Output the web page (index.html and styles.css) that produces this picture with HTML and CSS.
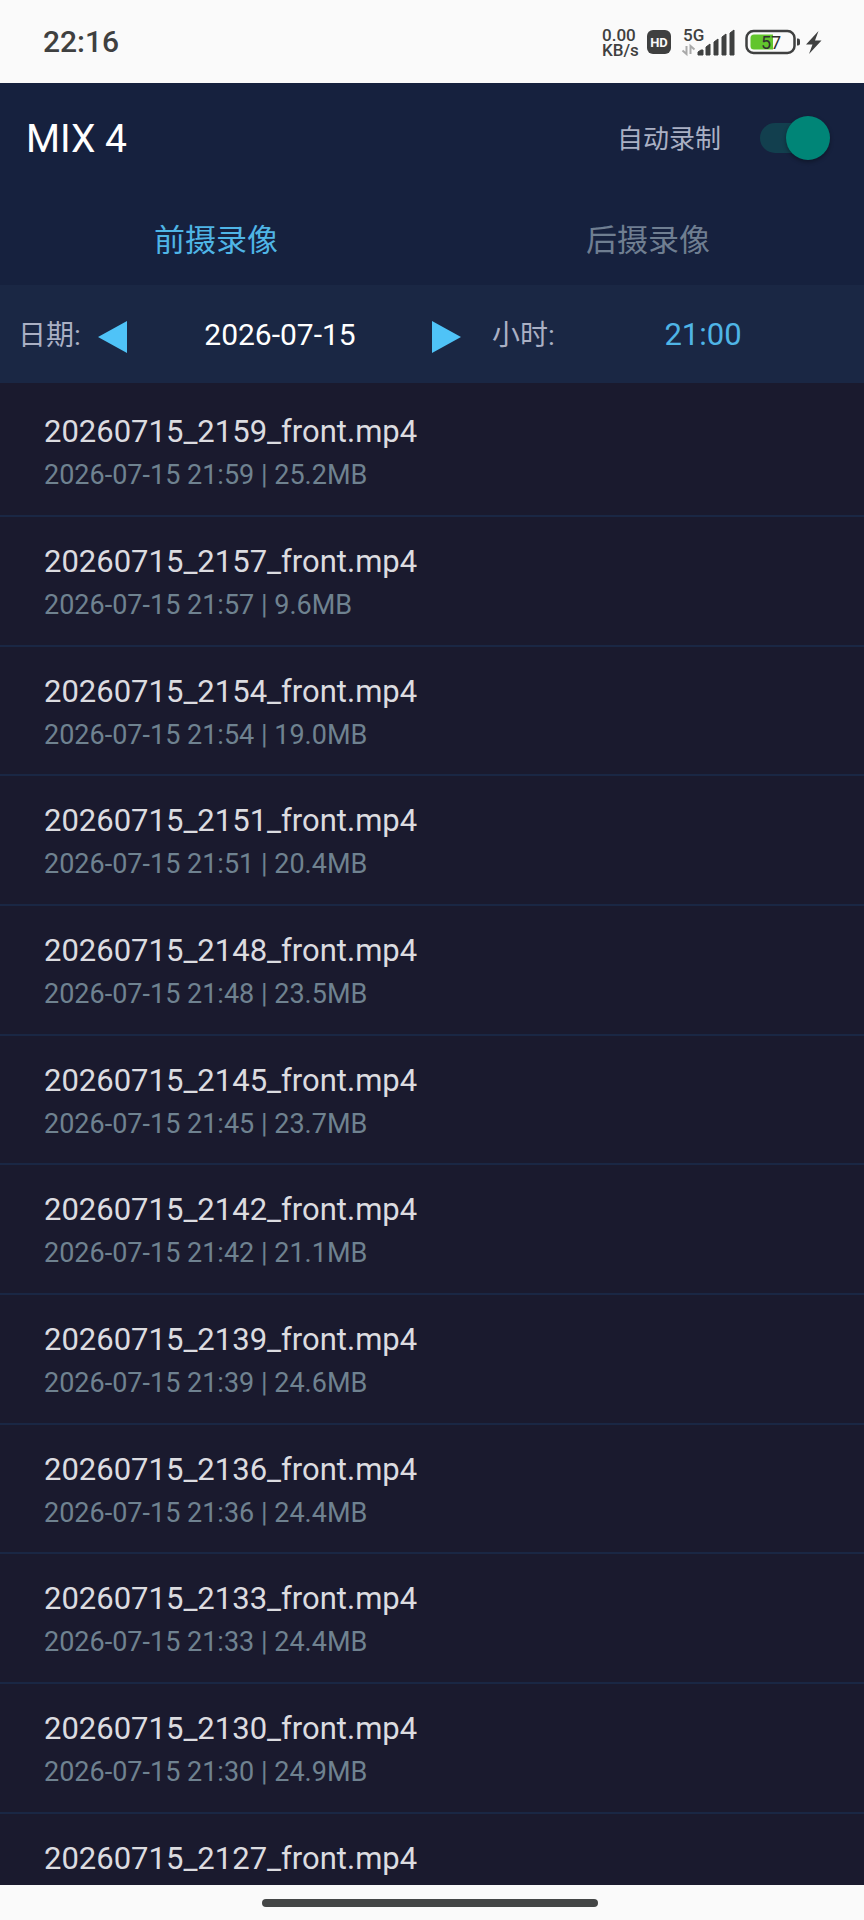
FILE: index.html
```html
<!DOCTYPE html>
<html lang="zh-CN">
<head>
<meta charset="utf-8">
<meta name="viewport" content="width=device-width, initial-scale=1">
<title>MIX 4</title>
<link rel="stylesheet" href="styles.css">
</head>
<body>
<div class="app">
  <div class="status">
    <span class="clock">22:16</span>
    <div class="status-icons">
      <div class="speed"><span>0.00</span><span>KB/s</span></div>
      <svg class="hd" width="24" height="24" viewBox="0 0 24 24" role="img" aria-label="HD">
        <rect width="24" height="24" rx="6" fill="#3f4040"/>
        <text x="12" y="17" text-anchor="middle" class="hd-text">HD</text>
      </svg>
      <svg class="signal" width="54" height="28" viewBox="0 0 54 28" role="img" aria-label="5G">
        <text x="2" y="13" class="net-text">5G</text>
        <path d="M5.500 18v8L1.500 22.500M9.500 26v-8l4 3.500" fill="none" stroke="#a9a9a9" stroke-width="2"/>
        <path d="M17 27v-3l3-2h2v5zM25 27v-8l4-3v11zM33 27V14l4-3v16zM41 27V9l4-3v21zM49 27V5l4-3v25z" fill="#3f4040" stroke="#3f4040" stroke-width="1" stroke-linejoin="round"/>
      </svg>
      <svg class="battery" width="78" height="26" viewBox="0 0 78 26" role="img" aria-label="57%">
        <rect x="1.500" y="2" width="48" height="22" rx="7" fill="none" stroke="#3f4040" stroke-width="2.500"/>
        <path d="M9 5.500h19v15H9a3.500 3.500 0 0 1-3.500-3.500V9A3.500 3.500 0 0 1 9 5.500z" fill="#62c52c"/>
        <path d="M52 9.500h1a2 2 0 0 1 2 2v3a2 2 0 0 1-2 2h-1z" fill="#3f4040"/>
        <text x="26" y="19.500" text-anchor="middle" class="battery-text">57</text>
        <path d="M73.500 2 61 15.500h6.500L64 25l12.500-13.500H70z" fill="#3f4040"/>
      </svg>
    </div>
  </div>

  <header class="header">
    <h1 class="title">MIX 4</h1>
    <label class="auto">
      <span class="auto-text">自动录制</span>
      <input class="switch" type="checkbox" role="switch" checked>
    </label>
  </header>

  <nav class="tabs">
    <button class="tab tab-active" type="button">前摄录像</button>
    <button class="tab" type="button">后摄录像</button>
  </nav>

  <div class="filters">
    <span class="filter-label">日期:</span>
    <button class="arrow" type="button" aria-label="前一天"><svg width="30" height="32" viewBox="0 0 30 32"><path d="M0 16 29 0v32z" fill="#4fc3f7"/></svg></button>
    <button class="date" type="button">2026-07-15</button>
    <button class="arrow" type="button" aria-label="后一天"><svg width="30" height="32" viewBox="0 0 30 32"><path d="M29 16 0 0v32z" fill="#4fc3f7"/></svg></button>
    <label class="filter-label hour-label" for="hour">小时:</label>
    <select class="hour" id="hour"><option>21:00</option></select>
  </div>

  <ul class="list">
    <li class="item"><span class="name">20260715_2159_front.mp4</span><span class="meta">2026-07-15 21:59 | 25.2MB</span></li>
    <li class="item"><span class="name">20260715_2157_front.mp4</span><span class="meta">2026-07-15 21:57 | 9.6MB</span></li>
    <li class="item"><span class="name">20260715_2154_front.mp4</span><span class="meta">2026-07-15 21:54 | 19.0MB</span></li>
    <li class="item"><span class="name">20260715_2151_front.mp4</span><span class="meta">2026-07-15 21:51 | 20.4MB</span></li>
    <li class="item"><span class="name">20260715_2148_front.mp4</span><span class="meta">2026-07-15 21:48 | 23.5MB</span></li>
    <li class="item"><span class="name">20260715_2145_front.mp4</span><span class="meta">2026-07-15 21:45 | 23.7MB</span></li>
    <li class="item"><span class="name">20260715_2142_front.mp4</span><span class="meta">2026-07-15 21:42 | 21.1MB</span></li>
    <li class="item"><span class="name">20260715_2139_front.mp4</span><span class="meta">2026-07-15 21:39 | 24.6MB</span></li>
    <li class="item"><span class="name">20260715_2136_front.mp4</span><span class="meta">2026-07-15 21:36 | 24.4MB</span></li>
    <li class="item"><span class="name">20260715_2133_front.mp4</span><span class="meta">2026-07-15 21:33 | 24.4MB</span></li>
    <li class="item"><span class="name">20260715_2130_front.mp4</span><span class="meta">2026-07-15 21:30 | 24.9MB</span></li>
    <li class="item"><span class="name">20260715_2127_front.mp4</span></li>
  </ul>

  <div class="home"><div class="home-pill"></div></div>
</div>
</body>
</html>
```
FILE: styles.css
```css
* {
  box-sizing: border-box;
}

body {
  margin: 0;
  background: #1a1a2e;
  font-family: Roboto, "Noto Sans CJK SC", sans-serif;
}

button,
select {
  margin: 0;
  padding: 0;
  border: 0;
  background: none;
  font-family: inherit;
}

svg {
  display: block;
  overflow: visible;
}

.app {
  display: flex;
  flex-direction: column;
  height: 100vh;
}

.status {
  display: flex;
  flex: none;
  align-items: center;
  justify-content: space-between;
  height: 83px;
  padding: 0 41px 0 43px;
  background: #fafafa;
  color: #3f4040;
}

.clock {
  font-size: 30px;
  font-weight: 500;
}

.status-icons {
  display: flex;
  align-items: center;
}

.speed {
  display: flex;
  flex-direction: column;
  width: 38px;
  margin-right: 7px;
  padding-top: 2px;
  font-size: 17px;
  font-weight: 500;
  line-height: 15px;
}

.hd {
  margin-right: 10px;
}

.signal {
  margin-right: 10px;
}

.hd-text {
  fill: #fafafa;
  font-size: 13px;
  font-weight: 700;
}

.net-text {
  fill: #3f4040;
  font-size: 17px;
  font-weight: 500;
}

.battery-text {
  fill: #303030;
  font-size: 18px;
  font-weight: 400;
}

.header {
  display: flex;
  flex: none;
  align-items: center;
  justify-content: space-between;
  height: 110px;
  padding: 0 34px 0 26px;
  background: #16213e;
}

.title {
  margin: 0;
  padding-top: 2px;
  color: #fff;
  font-size: 39px;
  font-weight: 400;
}

.auto {
  display: flex;
  align-items: center;
  gap: 39px;
  color: #aab0c4;
  font-size: 26px;
}

.auto-text {
  padding-bottom: 4px;
}

.switch {
  appearance: none;
  display: flex;
  align-items: center;
  width: 70px;
  height: 44px;
  margin: 0;
}

.switch::before {
  content: "";
  flex: none;
  width: 56px;
  height: 30px;
  margin-right: -30px;
  border-radius: 15px;
  background: #123f4e;
}

.switch::after {
  content: "";
  z-index: 1;
  flex: none;
  width: 44px;
  height: 44px;
  border-radius: 50%;
  background: #008577;
  box-shadow: 0 2px 4px #0005;
}

.tabs {
  display: grid;
  flex: none;
  grid-template-columns: 1fr 1fr;
  height: 92px;
  background: #16213e;
}

.tab {
  padding-bottom: 4px;
  color: #6f7e91;
  font-size: 31px;
}

.tab-active {
  color: #4fb5e6;
}

.filters {
  display: flex;
  flex: none;
  align-items: center;
  height: 98px;
  padding: 0 30px 0 18px;
  background: #1a2744;
}

.filter-label {
  width: 80px;
  padding-bottom: 2px;
  color: #aab0c4;
  font-size: 28px;
}

.arrow {
  padding-top: 5px;
}

.date {
  width: 304px;
  color: #fff;
  font-size: 30px;
}

.hour-label {
  margin-left: 30px;
}

.hour {
  flex: 1;
  appearance: none;
  color: #4fb5e6;
  font-size: 31px;
  text-align: center;
  text-align-last: center;
}

.list {
  display: grid;
  flex: 1;
  grid-auto-rows: minmax(130px, auto) minmax(130px, auto) minmax(129px, auto);
  min-height: 0;
  margin: 0;
  padding: 4px 0 0;
  overflow-y: auto;
  scrollbar-width: none;
  list-style: none;
}

.item {
  display: flex;
  flex-direction: column;
  padding: 23px 44px 0;
  border-bottom: 2px solid #1a2744;
}

.name {
  color: #dcdce0;
  font-size: 31px;
  line-height: 44px;
}

.meta {
  color: #6f8290;
  font-size: 27px;
  line-height: 42px;
}

.home {
  display: flex;
  flex: none;
  align-items: center;
  justify-content: center;
  height: 35px;
  padding-right: 4px;
  background: #fafafa;
}

.home-pill {
  width: 39%;
  height: 8px;
  border-radius: 4px;
  background: #444646;
}
```
